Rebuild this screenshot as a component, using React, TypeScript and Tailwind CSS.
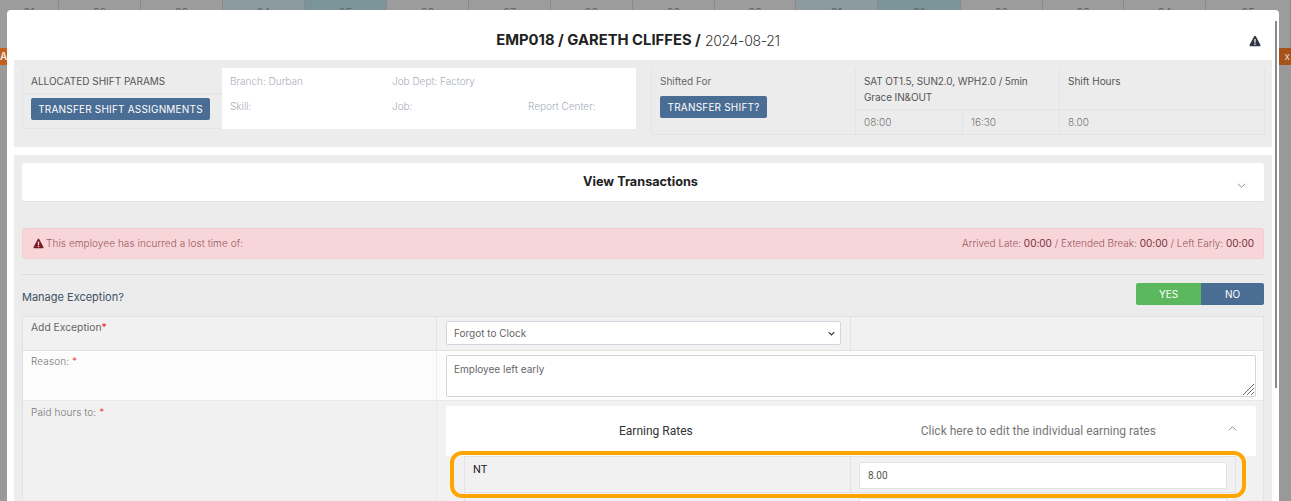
import React from 'react';

const sans = { fontFamily: 'Inter, "Noto Sans", sans-serif' };

const days = [
  { w: 'w-[59px]', n: '01', c: 'bg-[#9c9c9c]' },
  { w: 'w-[82px]', n: '02', c: 'bg-[#9c9c9c]' },
  { w: 'w-[82px]', n: '03', c: 'bg-[#9c9c9c]' },
  { w: 'w-[82px]', n: '24', c: 'bg-[#8b9b9f]' },
  { w: 'w-[82px]', n: '25', c: 'bg-[#7b9499]' },
  { w: 'w-[82px]', n: '26', c: 'bg-[#9c9c9c]' },
  { w: 'w-[82px]', n: '27', c: 'bg-[#9c9c9c]' },
  { w: 'w-[82px]', n: '28', c: 'bg-[#9c9c9c]' },
  { w: 'w-[82px]', n: '29', c: 'bg-[#9c9c9c]' },
  { w: 'w-[81px]', n: '30', c: 'bg-[#9c9c9c]' },
  { w: 'w-[82px]', n: '31', c: 'bg-[#8b9b9f]' },
  { w: 'w-[83px]', n: '01', c: 'bg-[#7b9499]' },
  { w: 'w-[82px]', n: '02', c: 'bg-[#9c9c9c]' },
  { w: 'w-[81px]', n: '03', c: 'bg-[#9c9c9c]' },
  { w: 'w-[82px]', n: '04', c: 'bg-[#9c9c9c]' },
  { w: 'w-[85px]', n: '05', c: 'bg-[#9c9c9c]' },
];

function Warn({ className }: { className: string }) {
  return (
    <svg viewBox="0 0 24 24" className={className} fill="currentColor">
      <path d="M10.3 2.6 1.2 19.7C.5 21 1.4 22.5 2.9 22.5h18.2c1.5 0 2.4-1.5 1.7-2.8L13.7 2.6c-.7-1.4-2.7-1.4-3.4 0Z" />
      <rect x="10.6" y="8" width="2.8" height="7.5" fill="#fff" opacity="0.85" />
      <rect x="10.6" y="17" width="2.8" height="2.8" fill="#fff" opacity="0.85" />
    </svg>
  );
}

function Chevron({ up }: { up?: boolean }) {
  return (
    <svg viewBox="0 0 10 6" className="w-[9px] h-[6px] text-[#8f8f8f]" fill="none" stroke="currentColor" strokeWidth="1.1">
      <path d={up ? 'M1 5.5 5 1.5 9 5.5' : 'M1 .5 5 4.5 9 .5'} />
    </svg>
  );
}

export default function App() {
  return (
    <div className="relative w-[1291px] h-[501px] overflow-hidden bg-[#999999]" style={sans}>
      {/* calendar behind the dialog */}
      <div className="flex h-[48px]">
        {days.map((d, i) => (
          <div key={i} className={`${d.w} ${d.c} shrink-0 border-r border-[#8a8a8a] text-center text-[11px] text-[#666] pt-[4px]`}>
            {d.n}
          </div>
        ))}
      </div>
      <div className="flex justify-between h-[17px]">
        <div className="w-[7px] bg-[#c4601d] text-[10px] font-semibold text-[#eee] overflow-hidden leading-[17px]">A</div>
        <div className="w-[12px] bg-[#a8521a] text-[10px] text-[#ddd] text-right pr-[1px] leading-[17px]">x</div>
      </div>

      {/* dialog */}
      <div className="absolute left-[7px] top-[10px] w-[1272px] h-[500px] bg-white rounded-[4px] px-[7px]">
        <div className="relative h-[50px] pt-[10px] pr-[10px] flex items-center justify-center text-[#222]">
          <span className="font-bold text-[14.8px]">EMP018 / GARETH CLIFFES /</span>
          <span className="font-light ml-[4px] text-[14px] tracking-[-0.3px] text-[#333]">2024-08-21</span>
          <Warn className="absolute left-[1235px] top-[25px] w-[12px] h-[12px] text-[#2f3542]" />
        </div>

        {/* shift summary */}
        <div className="h-[87px] w-[1258px] bg-[#ececec] px-[8px] pt-[8px] flex text-[10px] leading-[15px]">
          <div className="w-[200px] h-[61px] border-l border-b border-[#dfe3ea] text-[#555] shrink-0 flex flex-col">
            <div className="h-[26px] pl-[8px] pt-[2px] flex items-center border-b border-[#e2e2e2]">ALLOCATED SHIFT PARAMS</div>
            <div className="pl-[8px] pt-[4px]">
              <button className="w-[179px] h-[22px] bg-[#4a6d94] rounded-[2px] text-white text-[10px] tracking-[0.2px]">TRANSFER SHIFT ASSIGNMENTS</button>
            </div>
          </div>
          <div className="w-[414px] h-[61px] bg-white text-[#a8aebb] font-light pl-[8px] shrink-0 grid grid-cols-[162px_136px_1fr] grid-rows-[25px_25px] pt-[1px]">
            <div className="self-center">Branch: Durban</div>
            <div className="self-center">Job Dept: Factory</div>
            <div />
            <div className="self-center">Skill:</div>
            <div className="self-center">Job:</div>
            <div className="self-center">Report Center:</div>
          </div>
          <div className="ml-[15px] w-[614px] h-[67px] border border-t-0 border-[#dfe3ea] shrink-0 flex text-[#555]">
            <div className="w-[204px] border-r border-[#dfe3ea] pl-[8px] pt-[6px] shrink-0">
              <div className="text-[#666]">Shifted For</div>
              <button className="mt-[7px] w-[107px] h-[22px] bg-[#4a6d94] rounded-[2px] text-white text-[10px] tracking-[0.2px]">TRANSFER SHIFT?</button>
            </div>
            <div className="flex-1 grid grid-cols-[107px_97px_1fr] grid-rows-[42px_1fr]">
              <div className="col-span-2 pl-[8px] pr-[24px] pt-[5px] border-r border-b border-[#dfe3ea] leading-[16px] tracking-[-0.1px]">
                SAT OT1.5, SUN2.0, WPH2.0 / 5min Grace IN&amp;OUT
              </div>
              <div className="pl-[8px] pt-[6px] border-b border-[#dfe3ea]">Shift Hours</div>
              <div className="pl-[8px] pt-[5px] border-r border-[#dfe3ea] text-[#777] font-light">08:00</div>
              <div className="pl-[8px] pt-[5px] border-r border-[#dfe3ea] text-[#777] font-light">16:30</div>
              <div className="pl-[8px] pt-[5px] text-[#777] font-light">8.00</div>
            </div>
          </div>
        </div>

        {/* main panel */}
        <div className="mt-[8px] w-[1258px] h-[346px] bg-[#ececec] px-[8px] pt-[8px]">
          <div className="h-[39px] w-[1242px] bg-white rounded-[3px] border-b border-[#e2e2e2] relative flex items-center justify-center pr-[5px] text-[12.7px] font-bold text-[#222]">
            View Transactions
            <span className="absolute right-[18px] top-[20px] flex"><Chevron /></span>
          </div>

          <div className="mt-[26px] h-[31px] w-[1242px] bg-[#f7d5d9] border border-[#f4cdd2] rounded-[3px] flex items-center justify-between pl-[10px] pr-[9px] text-[10px] text-[#9a5560] font-light">
            <div className="flex items-center gap-[2px] tracking-[0.07px]">
              <Warn className="w-[11px] h-[11px] text-[#7b1c28]" />
              This employee has incurred a lost time of:
            </div>
            <div className="tracking-[-0.01px]">
              Arrived Late: <span className="font-normal text-[#7b2c38]">00:00</span> / Extended Break: <span className="font-normal text-[#7b2c38]">00:00</span> / Left Early: <span className="font-normal text-[#7b2c38]">00:00</span>
            </div>
          </div>

          <div className="mt-[15px] border-t border-[#dcdcdc] w-[1242px]" />

          <div className="mt-[8px] h-[22px] flex items-center justify-between w-[1242px]">
            <div className="text-[11px] text-[#3f5163] mt-[7px]">Manage Exception?</div>
            <div className="flex h-[22px] text-[10px] text-white">
              <div className="w-[65px] bg-[#5cb85c] rounded-l-[2px] flex items-center justify-center">YES</div>
              <div className="w-[63px] bg-[#4a6d94] rounded-r-[2px] flex items-center justify-center">NO</div>
            </div>
          </div>

          {/* exception form */}
          <div className="mt-[11px] w-[1242px] border border-[#e2e2e2] text-[10px]">
            <div className="flex h-[34px] bg-[#f1f1f1] border-b border-[#e2e2e2]">
              <div className="w-[414px] pl-[8px] pt-[3px] border-r border-[#e2e2e2] text-[#666] text-[10.3px]">
                Add Exception<span className="text-[#e33]">*</span>
              </div>
              <div className="w-[414px] pl-[9px] pt-[4px] border-r border-[#e2e2e2]">
                <div className="w-[395px] h-[24px] bg-white border border-[#cfd6df] rounded-[2px] flex items-center justify-between pl-[7px] pr-[5px] text-[#666]">
                  Forgot to Clock
                  <svg viewBox="0 0 10 6" className="w-[7px] h-[5px]" fill="none" stroke="#333" strokeWidth="1.6"><path d="M1 1l4 4 4-4" /></svg>
                </div>
              </div>
            </div>
            <div className="flex h-[50px] bg-[#fcfcfc] border-b border-[#e8e8e8]">
              <div className="w-[414px] pl-[8px] pt-[3px] border-r border-[#eeeeee] text-[#777] font-light tracking-[0.1px]">
                Reason: <span className="text-[#e33]">*</span>
              </div>
              <div className="pl-[9px] pt-[4px]">
                <div className="relative w-[810px] h-[42px] bg-white border border-[#cfd6df] rounded-[2px] pl-[7px] pt-[6px] text-[#666]">
                  Employee left early
                  <svg viewBox="0 0 12 12" className="absolute right-[1px] bottom-[1px] w-[12px] h-[12px]" stroke="#666" strokeWidth="1"><path d="M1 12 12 1M5 12l7-7M9 12l3-3" /></svg>
                </div>
              </div>
            </div>
            <div className="flex h-[110px] bg-[#f1f1f1]">
              <div className="w-[414px] pl-[8px] pt-[4px] border-r border-[#e8e8e8] text-[#777] font-light tracking-[0.1px]">
                Paid hours to: <span className="text-[#e33]">*</span>
              </div>
              <div className="pl-[9px] pt-[5px]">
                <div className="w-[810px] h-[50px] bg-white rounded-t-[3px] flex items-center relative text-[12px]" style={{ fontFamily: 'Roboto, sans-serif' }}>
                  <span className="ml-[173px] text-[#333]">Earning Rates</span>
                  <span className="ml-[228px] text-[#777]">Click here to edit the individual earning rates</span>
                  <span className="absolute right-[19px] top-[19px] flex"><Chevron up /></span>
                </div>
                <div className="ml-[18px] w-[772px] h-[37px] bg-[#f1f1f1] border border-[#e2e2e2] flex" style={{ fontFamily: 'Roboto, sans-serif' }}>
                  <div className="w-[386px] pl-[8px] pt-[5px] text-[11px] text-[#222] border-r border-[#e2e2e2]">NT</div>
                  <div className="pl-[8px] pt-[5px]">
                    <div className="w-[368px] h-[27px] bg-white border border-[#e2e2e2] rounded-[2px] flex items-center pl-[8px] text-[10px] text-[#555]">8.00</div>
                  </div>
                </div>
                <div className="ml-[18px] w-[772px] h-[10px] bg-[#f1f1f1] border-x border-[#e2e2e2] flex">
                  <div className="ml-[394px] mt-[5px] w-[368px] h-[5px] bg-white border border-[#e2e2e2]" />
                </div>
              </div>
            </div>
          </div>
        </div>

        {/* scrollbar */}
        <div className="absolute left-[1268px] top-[11px] w-[2px] h-[367px] bg-[#8a8a8a]" />
      </div>

      {/* highlight around the NT row */}
      <div className="absolute left-[450px] top-[451px] w-[796px] h-[47px] border-[4px] border-[#ffa500] rounded-[12px]" />
    </div>
  );
}
